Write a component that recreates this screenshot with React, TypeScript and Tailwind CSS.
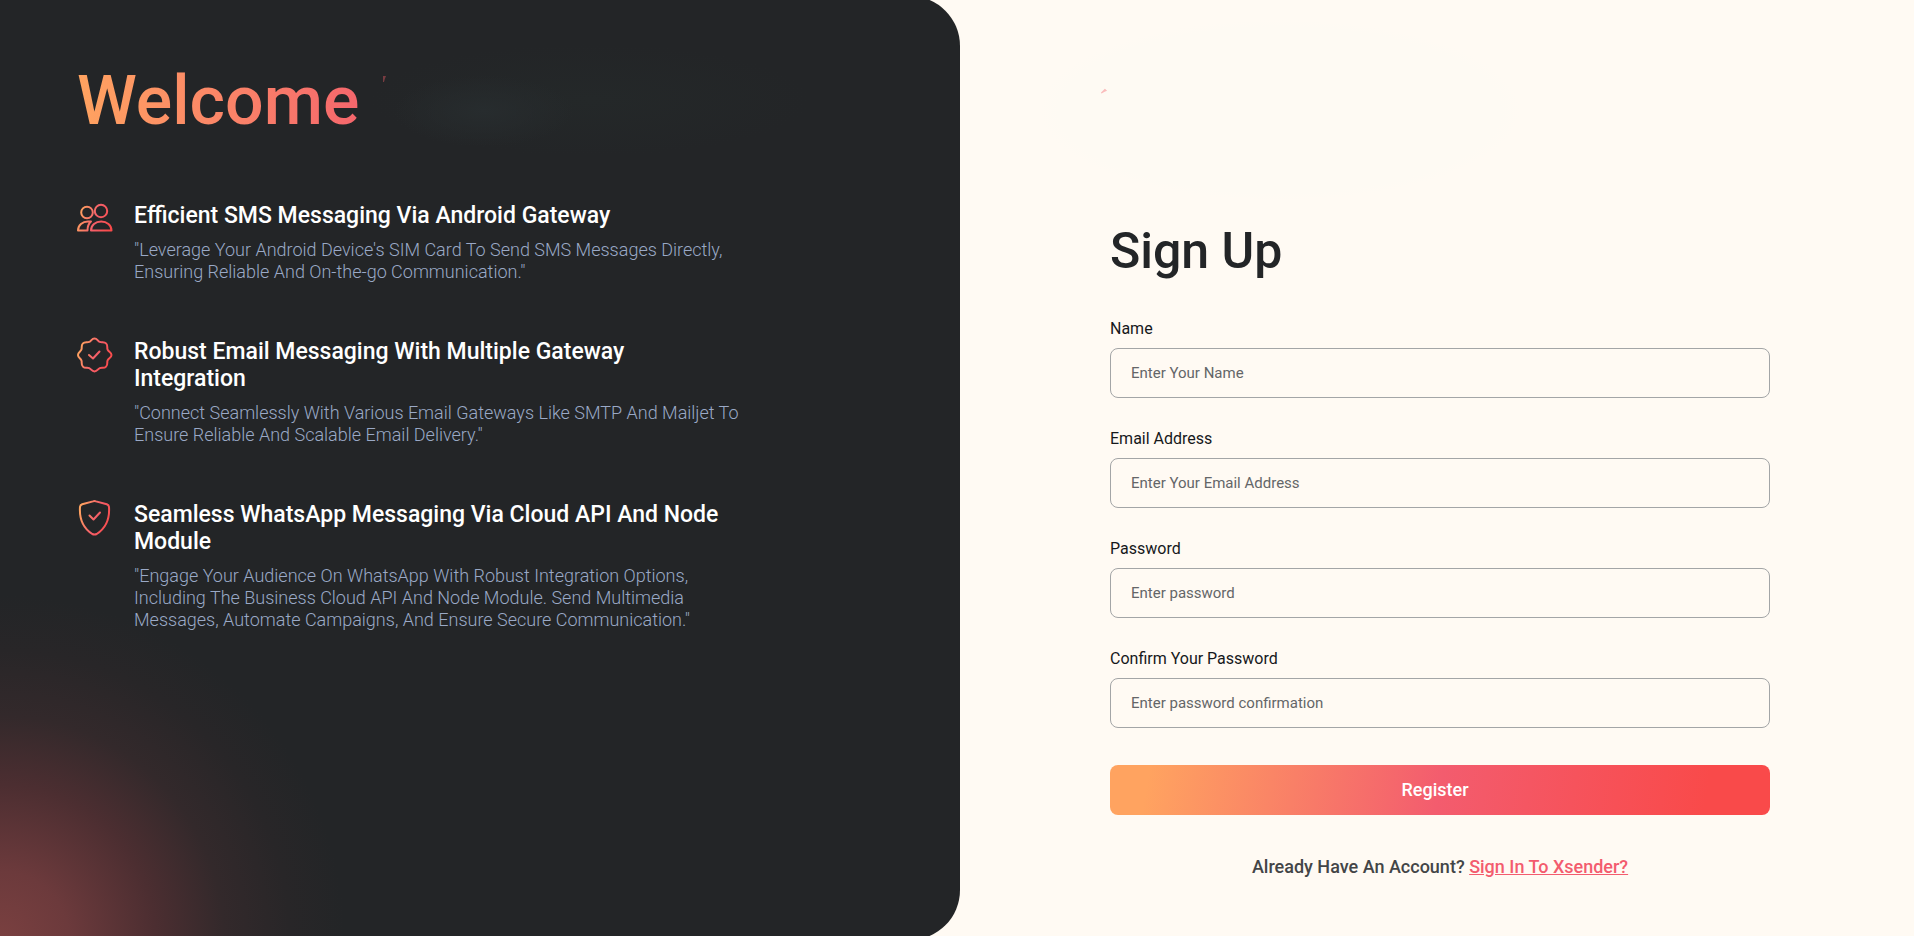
import type { ReactNode } from 'react'

const features = [
  {
    icon: 'users',
    title: 'Efficient SMS Messaging Via Android Gateway',
    text: '"Leverage Your Android Device\'s SIM Card To Send SMS Messages Directly,\nEnsuring Reliable And On-the-go Communication."',
  },
  {
    icon: 'badge',
    title: 'Robust Email Messaging With Multiple Gateway\nIntegration',
    text: '"Connect Seamlessly With Various Email Gateways Like SMTP And Mailjet To\nEnsure Reliable And Scalable Email Delivery."',
  },
  {
    icon: 'shield',
    title: 'Seamless WhatsApp Messaging Via Cloud API And Node\nModule',
    text: '"Engage Your Audience On WhatsApp With Robust Integration Options,\nIncluding The Business Cloud API And Node Module. Send Multimedia\nMessages, Automate Campaigns, And Ensure Secure Communication."',
  },
]

const fields = [
  { id: 'name', label: 'Name', type: 'text', placeholder: 'Enter Your Name' },
  { id: 'email', label: 'Email Address', type: 'email', placeholder: 'Enter Your Email Address' },
  { id: 'password', label: 'Password', type: 'password', placeholder: 'Enter password' },
  {
    id: 'password_confirmation',
    label: 'Confirm Your Password',
    type: 'password',
    placeholder: 'Enter password confirmation',
  },
]

const drawings: Record<string, ReactNode> = {
  users: (
    <>
      <circle cx="10" cy="11.5" r="5.8" />
      <circle cx="24" cy="10" r="6.2" />
      <path d="M14 20.5H11C5.5 20.5 1 24 1 29.5H10.5C10.5 25.5 11.5 22.6 14 20.5Z" />
      <path d="M14 29.5C14 24 18.5 20.5 24.2 20.5S34.5 24 34.5 29.5Z" />
    </>
  ),
  badge: (
    <>
      <path d="M17.5 1.5C20.3 1.5 20.7 4 22.8 4.9C24.9 5.8 27.1 4.3 29.1 6.4C31.2 8.4 29.7 10.6 30.6 12.7C31.5 14.8 34.5 15.2 34.5 18C34.5 20.8 31.5 21.2 30.6 23.3C29.7 25.4 31.2 27.6 29.1 29.6C27.1 31.7 24.9 30.2 22.8 31.1C20.7 32 20.3 34.5 17.5 34.5C14.7 34.5 14.3 32 12.2 31.1C10.1 30.2 7.9 31.7 5.9 29.6C3.8 27.6 5.3 25.4 4.4 23.3C3.5 21.2 1 20.8 1 18C1 15.2 3.5 14.8 4.4 12.7C5.3 10.6 3.8 8.4 5.9 6.4C7.9 4.3 10.1 5.8 12.2 4.9C14.3 4 14.7 1.5 17.5 1.5Z" />
      <path d="M12 18L16 21.5L22.5 14.5" />
    </>
  ),
  shield: (
    <>
      <path d="M16 1.4Q17.5 0.8 19 1.4L29.8 4.3Q31.8 5 32 6.9C32.8 18.5 29 28 19.7 34Q17.5 35.2 15.3 34C6 28 2.2 18.5 3 6.9Q3.2 5 5.2 4.3Z" />
      <path d="M12.5 15.5L16.5 19.5L23 12.5" />
    </>
  ),
}

const FeatureIcon = ({ name }: { name: string }) => {
  return (
    <svg
      viewBox="0 0 36 36"
      className="-mt-px size-9 shrink-0"
      fill="none"
      stroke={`url(#${name}-gradient)`}
      strokeWidth="2"
      strokeLinecap="round"
      strokeLinejoin="round"
      aria-hidden="true"
    >
      <defs>
        <linearGradient id={`${name}-gradient`} gradientUnits="userSpaceOnUse" x1="0" y1="12" x2="36" y2="24">
          <stop offset="0.05" stopColor="#ffa360" />
          <stop offset="0.5" stopColor="#f5606a" />
          <stop offset="0.95" stopColor="#f94a4a" />
        </linearGradient>
      </defs>
      {drawings[name]}
    </svg>
  )
}

const Spark = ({ className }: { className: string }) => {
  return (
    <svg viewBox="0 0 6 7" className={className} aria-hidden="true">
      <path d="M1 0H4Q3 2 2 6H1Z" fill="#f5606a" />
    </svg>
  )
}

const Welcome = () => {
  return (
    <section className="relative -my-1 w-[calc(50%+3px)] shrink-0 rounded-r-[50px] bg-[#232527] bg-[radial-gradient(circle_345px_at_0%_100%,#7a4040_0%,#6c3a3c_20%,#4c2e31_45%,#33292b_65%,#282628_84%,transparent_100%),radial-gradient(ellipse_90px_36px_at_484px_115px,#272c2e_0%,transparent_100%),radial-gradient(ellipse_220px_56px_at_590px_104px,#242829_0%,transparent_100%)] pt-[61px] pl-[77px]">
      <Spark className="absolute top-20 left-[382px] h-[7px] w-[6px] opacity-40" />
      <h1 className="w-fit bg-linear-to-r from-[#ffa360] to-[#f5666c] bg-clip-text text-[68px] leading-[88px] font-medium text-transparent">
        Welcome
      </h1>
      <ul className="mt-[57px] grid gap-[55px]">
        {features.map((feature) => (
          <li key={feature.icon} className="flex gap-[21px]">
            <FeatureIcon name={feature.icon} />
            <div className="grid gap-[10px]">
              <h2 className="text-[23px] leading-[27px] font-medium whitespace-pre-line text-white">{feature.title}</h2>
              <p className="text-[18px] leading-[22px] font-light whitespace-pre-line text-[#9aa9c6]">{feature.text}</p>
            </div>
          </li>
        ))}
      </ul>
    </section>
  )
}

const SignUp = () => {
  return (
    <section className="relative grow bg-[radial-gradient(ellipse_240px_90px_at_320px_110px,#fefaf3_0%,#fefaf3_92%,transparent_100%)] pt-[217px] pr-36 pl-[150px]">
      <Spark className="absolute top-[89px] left-[141px] h-[7px] w-[6px] rotate-45 opacity-40" />
      <h1 className="text-[50px] leading-[68px] font-medium text-[#232527]">Sign Up</h1>
      <form className="mt-9">
        <div className="grid gap-[33px]">
          {fields.map((field) => (
            <div key={field.id} className="grid gap-[11px]">
              <label htmlFor={field.id} className="text-[16px] leading-4 text-[#16181b]">
                {field.label}
              </label>
              <input
                id={field.id}
                type={field.type}
                placeholder={field.placeholder}
                className="h-[50px] w-full rounded-lg border border-[#a3a5a6] bg-transparent px-5 text-[15px] text-[#232527] placeholder:text-[#646668]"
              />
            </div>
          ))}
        </div>
        <button
          type="submit"
          className="mt-[37px] h-[50px] w-full rounded-lg bg-[linear-gradient(100deg,#ffa360_6%,#f35c6e_50%,#f94a4a_90%)] pr-[10px] pb-[2px] text-[18px] font-medium text-white"
        >
          Register
        </button>
      </form>
      <p className="mt-10 text-center text-[18px] leading-6 font-medium text-[#434547]">
        Already Have An Account?{' '}
        <a href="#" className="text-[#f35c6e] underline">
          Sign In To Xsender?
        </a>
      </p>
    </section>
  )
}

const App = () => {
  return (
    <main className="flex min-h-screen overflow-hidden bg-[#fffaf3] font-['Roboto',sans-serif]">
      <Welcome />
      <SignUp />
    </main>
  )
}

export default App
